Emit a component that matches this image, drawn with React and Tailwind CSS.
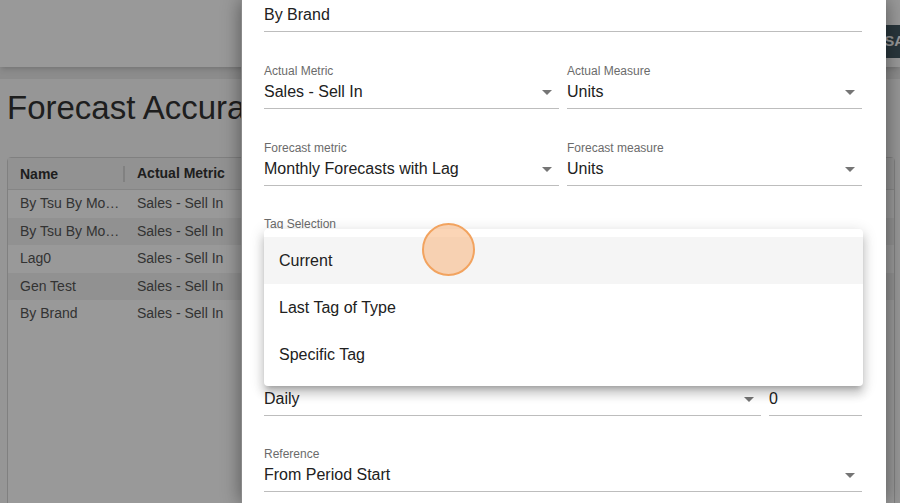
import React from 'react';

const rows = [
  { name: 'By Tsu By Mo…', metric: 'Sales - Sell In' },
  { name: 'By Tsu By Mo…', metric: 'Sales - Sell In' },
  { name: 'Lag0', metric: 'Sales - Sell In' },
  { name: 'Gen Test', metric: 'Sales - Sell In' },
  { name: 'By Brand', metric: 'Sales - Sell In' },
];

function Arrow() {
  return (
    <svg viewBox="0 0 24 24" className="w-6 h-6 shrink-0 fill-[#757575]">
      <path d="M7 10l5 5 5-5z" />
    </svg>
  );
}

function Field({ label, value, arrow = true, className = '' }) {
  return (
    <div className={className}>
      <div className="text-[12px] leading-[14px] h-[14px] text-[#6b6b6b]">{label}</div>
      <div className="mt-[2px] pb-[4px] border-b border-[#bdbdbd] flex items-center justify-between h-[29px]">
        <span className="text-[16px] leading-[24px] text-[#212121]">{value}</span>
        {arrow && <Arrow />}
      </div>
    </div>
  );
}

export default function App() {
  return (
    <div className="relative w-[900px] h-[503px] overflow-hidden font-['Liberation_Sans',Arial,sans-serif] bg-white">
      {/* page behind the dialog */}
      <div className="flex flex-col h-full">
        <div className="h-[67px] bg-white shadow-md relative shrink-0">
          <div className="absolute right-[-60px] top-[25px] h-[33px] w-[134px] bg-[#455a64] rounded text-white text-[15px] font-bold flex items-center justify-end pr-[55px]">
            SA
          </div>
        </div>
        <div className="h-[12px] bg-[#e9e9e9] shrink-0" />
        <div className="flex-1 bg-[#fbfbfb] px-[7px]">
          <h1 className="text-[33px] leading-[40px] text-[#333] mt-[9px]">Forecast Accuracy</h1>
          <div className="mt-[29px] w-[888px] h-[400px] border border-[#d6d6d6] rounded bg-white">
            <div className="flex h-[32px] items-center bg-[#f3f3f3] border-b border-[#dedede] text-[14px] font-bold text-[#333]">
              <div className="w-[117px] pl-[12px] border-r-2 border-[#d8d8d8] leading-[16px]">Name</div>
              <div className="pl-[12px]">Actual Metric</div>
            </div>
            {rows.map((r, i) => (
              <div key={i} className={`flex h-[27.5px] items-center text-[14px] text-[#555] ${i % 2 === 1 ? 'bg-[#f2f2f2]' : 'bg-white'}`}>
                <div className="w-[117px] pl-[12px]">{r.name}</div>
                <div className="pl-[12px]">{r.metric}</div>
              </div>
            ))}
          </div>
        </div>
      </div>

      {/* backdrop */}
      <div className="absolute inset-0 z-20 bg-black/40" />

      {/* dialog */}
      <div className="absolute z-30 left-[241px] top-0 w-[645px] h-full bg-white shadow-[0_0_18px_rgba(0,0,0,0.45)] border-l border-[#8a8a8a]">
        <div className="pl-[22px] pr-[24px] mt-[-13px]">
          <Field label="Name" value="By Brand" arrow={false} />
          <div className="grid grid-cols-2 gap-x-[8px] mt-[32px]">
            <Field label="Actual Metric" value="Sales - Sell In" />
            <Field label="Actual Measure" value="Units" />
          </div>
          <div className="grid grid-cols-2 gap-x-[8px] mt-[32px]">
            <Field label="Forecast metric" value="Monthly Forecasts with Lag" />
            <Field label="Forecast measure" value="Units" />
          </div>
          <Field className="mt-[31px]" label="Tag Selection" value="" />
          <Field className="mt-[31px]" label="" value="" />
          <div className="flex gap-x-[8px] mt-[33px]">
            <Field className="flex-1" label="" value="Daily" />
            <Field className="w-[93px]" label="" value="0" arrow={false} />
          </div>
          <Field className="mt-[31px]" label="Reference" value="From Period Start" />
        </div>

        {/* open menu */}
        <div className="absolute left-[22px] top-[229px] w-[599px] py-[8px] bg-white rounded shadow-[0_5px_5px_-3px_rgba(0,0,0,0.2),0_8px_10px_1px_rgba(0,0,0,0.14),0_3px_14px_2px_rgba(0,0,0,0.12)]">
          <div className="h-[47px] flex items-center px-[15px] text-[16px] text-[#212121] bg-[#f5f5f5]">Current</div>
          <div className="h-[47px] flex items-center px-[15px] text-[16px] text-[#212121]">Last Tag of Type</div>
          <div className="h-[47px] flex items-center px-[15px] text-[16px] text-[#212121]">Specific Tag</div>
        </div>

        {/* click marker */}
        <div className="absolute left-[180px] top-[223px] w-[53px] h-[53px] rounded-full bg-[#f7b27a]/55 border-2 border-[#f2a35f]" />
      </div>
    </div>
  );
}
